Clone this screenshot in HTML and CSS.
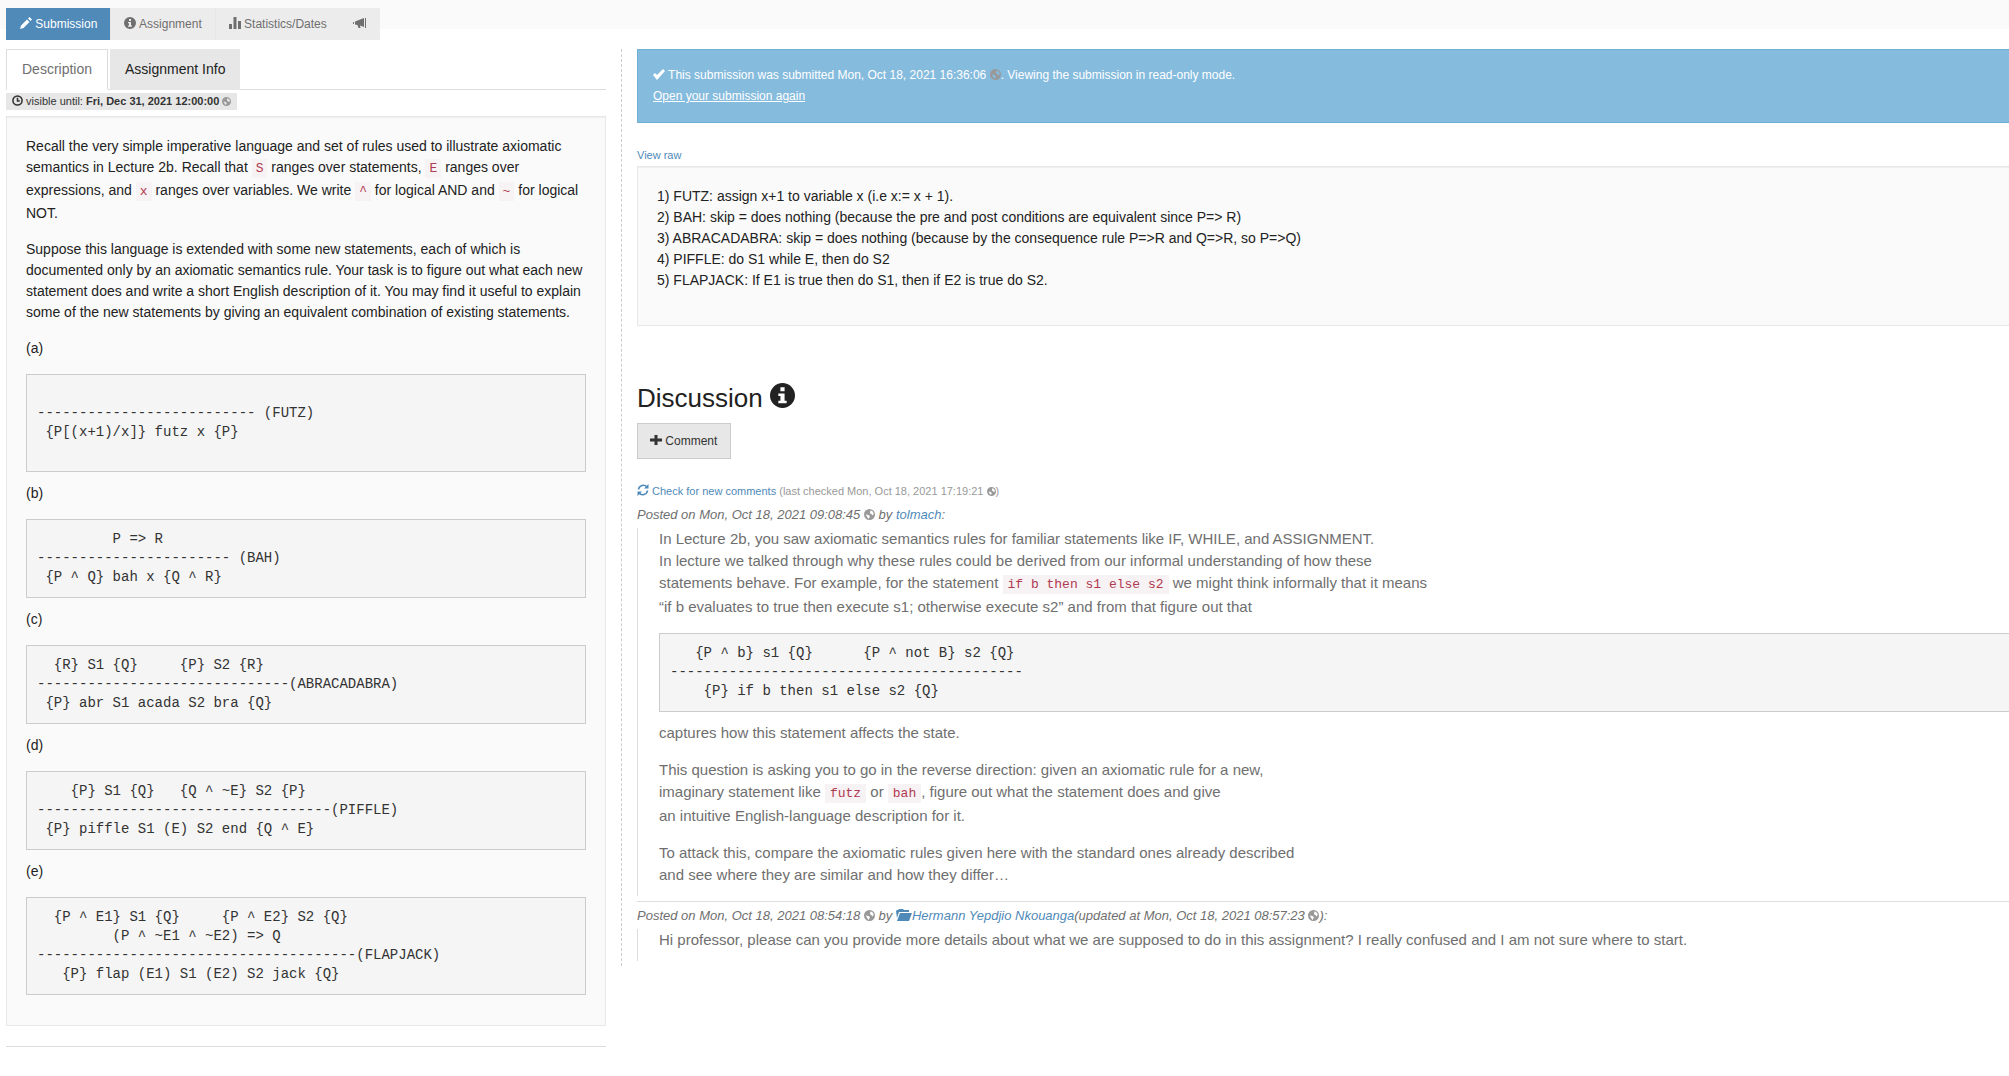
FILE: index.html
```
<!DOCTYPE html>
<html lang="en">
<head>
<meta charset="utf-8">
<title>Submission</title>
<link rel="stylesheet" href="styles.css">
</head>
<body>
<svg class="sprite" aria-hidden="true">
  <symbol id="pencil" viewBox="0 0 12 12"><path d="M0 12l1-3.500 6-6L9.500 5l-6 6zM8 1.500L9.500 0 12 2.500 10.500 4z"/></symbol>
  <symbol id="info" viewBox="0 0 24 24"><path fill-rule="evenodd" d="M12 0a12 12 0 1 0 0 24a12 12 0 0 0 0-24zM10 4h4v4h-4zM8 10h6v7h2v2.500H8V17h2v-4.500H8z"/></symbol>
  <symbol id="stats" viewBox="0 0 12 12"><path d="M0 7h3v5H0zM4.500 0h3v12h-3zM9 4h3v8H9z"/></symbol>
  <symbol id="horn" viewBox="0 0 14 12"><path d="M0 5h1v2H0zM2 4.500L11 1v9L7 8.500l.500 2.500h-2L4.500 8 2 7.500zM12 1h1v10h-1z"/></symbol>
  <symbol id="clock" viewBox="0 0 12 12"><path fill="none" stroke="currentColor" stroke-width="1.700" d="M6 1a5 5 0 1 0 0 10A5 5 0 0 0 6 1zM6 3v3.500h2.500"/></symbol>
  <symbol id="globe" viewBox="0 0 12 12"><path fill-rule="evenodd" d="M6 0a6 6 0 1 0 0 12A6 6 0 0 0 6 0zM7 1.500l2 .8 1.700 2.700L9.500 7 8 5.500 6.500 4.500zM2 6l3 .5L6.500 8 5 10.800 3.500 9z"/></symbol>
  <symbol id="check" viewBox="0 0 12 12"><path d="M0 7l2-2 2 2 6-6 2 2-8 9z"/></symbol>
  <symbol id="plus" viewBox="0 0 12 12"><path d="M4.500 1h3v3.500H12v3H7.500V11h-3V7.500H0v-3h4.500z"/></symbol>
  <symbol id="refresh" viewBox="0 0 12 12"><path fill="none" stroke="currentColor" stroke-width="1.600" d="M1.500 5.500C2 1 7.500 0 10 3M10.500 6.500C10 11 4.500 12 2 9"/><path d="M11.500 0v4.500H7zM.5 12V7.500H5z"/></symbol>
  <symbol id="folder" viewBox="0 0 16 12"><path d="M0 2l1-1h1l1-1h4l1 1h5v2H3L1 9zM4 4h12l-3 8H1z"/></symbol>
</svg>
<div class="topband">
  <nav class="crumbs">
    <a class="crumb active" href="#submission"><svg class="icon"><use href="#pencil"/></svg> Submission</a>
    <a class="crumb" href="#assignment"><svg class="icon"><use href="#info"/></svg> Assignment</a>
    <a class="crumb plain" href="#statistics"><svg class="icon"><use href="#stats"/></svg> Statistics/Dates</a>
    <a class="crumb plain" href="#announcements" aria-label="Announcements"><svg class="icon horn"><use href="#horn"/></svg></a>
  </nav>
</div>
<div class="columns">
  <section class="task">
    <div class="tabs" role="tablist">
      <button class="tab selected" type="button" role="tab" aria-selected="true">Description</button>
      <button class="tab" type="button" role="tab" aria-selected="false">Assignment Info</button>
    </div>
    <div class="until"><svg class="icon small"><use href="#clock"/></svg> visible until: <b>Fri, Dec 31, 2021 12:00:00</b> <svg class="icon globe tiny"><use href="#globe"/></svg></div>
    <div class="well">
      <p>Recall the very simple imperative language and set of rules used to illustrate axiomatic semantics in Lecture 2b. Recall that <code>S</code> ranges over statements, <code>E</code> ranges over expressions, and <code>x</code> ranges over variables. We write <code>^</code> for logical AND and <code>~</code> for logical NOT.</p>
      <p>Suppose this language is extended with some new statements, each of which is documented only by an axiomatic semantics rule. Your task is to figure out what each new statement does and write a short English description of it. You may find it useful to explain some of the new statements by giving an equivalent combination of existing statements.</p>
      <p>(a)</p>
<pre>&#32;
-------------------------- (FUTZ)
 {P[(x+1)/x]} futz x {P}
&#32;
</pre>
      <p>(b)</p>
<pre>         P =&gt; R
----------------------- (BAH)
 {P ^ Q} bah x {Q ^ R}
</pre>
      <p>(c)</p>
<pre>  {R} S1 {Q}     {P} S2 {R}
------------------------------(ABRACADABRA)
 {P} abr S1 acada S2 bra {Q}
</pre>
      <p>(d)</p>
<pre>    {P} S1 {Q}   {Q ^ ~E} S2 {P}
-----------------------------------(PIFFLE)
 {P} piffle S1 (E) S2 end {Q ^ E}
</pre>
      <p>(e)</p>
<pre>  {P ^ E1} S1 {Q}     {P ^ E2} S2 {Q}
         (P ^ ~E1 ^ ~E2) =&gt; Q
--------------------------------------(FLAPJACK)
   {P} flap (E1) S1 (E2) S2 jack {Q}
</pre>
    </div>
    <hr>
  </section>
  <main class="work">
    <div class="alert">
      <div><svg class="icon"><use href="#check"/></svg> This submission was submitted Mon, Oct 18, 2021 16:36:06 <svg class="icon globe small"><use href="#globe"/></svg>. Viewing the submission in read-only mode.</div>
      <a href="#reopen">Open your submission again</a>
    </div>
    <div class="raw"><a href="#raw">View raw</a></div>
    <div class="well">
      <p>1) FUTZ: assign x+1 to variable x (i.e x:= x + 1).<br>
      2) BAH: skip = does nothing (because the pre and post conditions are equivalent since P=&gt; R)<br>
      3) ABRACADABRA: skip = does nothing (because by the consequence rule P=&gt;R and Q=&gt;R, so P=&gt;Q)<br>
      4) PIFFLE: do S1 while E, then do S2<br>
      5) FLAPJACK: If E1 is true then do S1, then if E2 is true do S2.</p>
    </div>
    <h2>Discussion <svg class="icon heading"><use href="#info"/></svg></h2>
    <button class="comment" type="button"><svg class="icon"><use href="#plus"/></svg> Comment</button>
    <div class="check"><a href="#check-new"><svg class="icon"><use href="#refresh"/></svg> Check for new comments</a> (last checked Mon, Oct 18, 2021 17:19:21 <svg class="icon globe tiny"><use href="#globe"/></svg>)</div>
    <article class="post">
      <div class="byline">Posted on Mon, Oct 18, 2021 09:08:45 <svg class="icon globe small"><use href="#globe"/></svg> by <a href="#tolmach">tolmach</a>:</div>
      <blockquote>
        <p>In Lecture 2b, you saw axiomatic semantics rules for familiar statements like IF, WHILE, and ASSIGNMENT.<br>
        In lecture we talked through why these rules could be derived from our informal understanding of how these<br>
        statements behave. For example, for the statement <code>if b then s1 else s2</code> we might think informally that it means<br>
        “if b evaluates to true then execute s1; otherwise execute s2” and from that figure out that</p>
<pre>   {P ^ b} s1 {Q}      {P ^ not B} s2 {Q}
------------------------------------------
    {P} if b then s1 else s2 {Q}
</pre>
        <p>captures how this statement affects the state.</p>
        <p>This question is asking you to go in the reverse direction: given an axiomatic rule for a new,<br>
        imaginary statement like <code>futz</code> or <code>bah</code>, figure out what the statement does and give<br>
        an intuitive English-language description for it.</p>
        <p>To attack this, compare the axiomatic rules given here with the standard ones already described<br>
        and see where they are similar and how they differ…</p>
      </blockquote>
    </article>
    <article class="post">
      <div class="byline">Posted on Mon, Oct 18, 2021 08:54:18 <svg class="icon globe small"><use href="#globe"/></svg> by <a href="#hermann"><svg class="icon folder"><use href="#folder"/></svg>Hermann Yepdjio Nkouanga</a>(updated at Mon, Oct 18, 2021 08:57:23 <svg class="icon globe small"><use href="#globe"/></svg>):</div>
      <blockquote>
        <p>Hi professor, please can you provide more details about what we are supposed to do in this assignment? I really confused and I am not sure where to start.</p>
      </blockquote>
    </article>
  </main>
</div>
</body>
</html>
```
FILE: styles.css
```
* { box-sizing: border-box; }

body {
  margin: 0;
  background: #fff;
  color: #222;
  font: 14px/21px "Liberation Sans", Arial, sans-serif;
}

a { color: #4f8ab9; text-decoration: none; }
p { margin: 0 0 15px; }
button { font-family: inherit; }

.sprite { position: absolute; width: 0; height: 0; }
.icon { width: 12px; height: 12px; fill: currentColor; vertical-align: -1px; }
.icon.small { width: 11px; height: 11px; }
.icon.tiny { width: 9px; height: 9px; }
.icon.globe { color: #999; }
.icon.horn { width: 14px; }
.icon.folder { width: 16px; }
.icon.heading { width: 25px; height: 25px; }

/* Breadcrumb bar */
.topband { height: 29px; background: #fafafa; padding: 8px 6px 0; }
.crumbs {
  display: inline-flex;
  height: 32px;
  background: #ececec;
  font-size: 12px;
  line-height: 32px;
  white-space: nowrap;
}
.crumb { padding: 0 13px; color: #6f6f6f; border-right: 1px solid #e6e6e6; }
.crumb.plain { border-right: 0; }
.crumb.active { padding-left: 14px; background: #4f8ab9; color: #fff; }

/* Two columns */
.columns { display: flex; align-items: flex-start; padding: 20px 0 0 6px; }
.task { flex: 0 0 600px; }
.work {
  flex: 1;
  min-width: 0;
  margin-left: 15px;
  padding-left: 15px;
  border-left: 1px dashed #ccc;
}

.tabs { display: flex; gap: 2px; border-bottom: 1px solid #ddd; }
.tab {
  height: 41px;
  margin-bottom: -1px;
  padding: 0 15px 2px;
  border: 0;
  background: #e7e7e7;
  color: #222;
  font-size: 14px;
}
.tab.selected {
  border: 1px solid #ddd;
  border-bottom-color: #fff;
  background: #fff;
  color: #6f6f6f;
}

.until {
  display: inline-block;
  height: 17px;
  margin: 3px 0 6px;
  padding: 0 6px;
  background: #e7e7e7;
  color: #333;
  font-size: 11px;
  line-height: 17px;
  vertical-align: top;
}

.well {
  padding: 19px;
  border: 1px solid #e8e8e8;
  background: #fafafa;
  box-shadow: inset 0 1px 1px rgba(0, 0, 0, 0.05);
}
.task .well { margin-bottom: 20px; }
.work .well { border-right: 0; }

code {
  padding: 2px 4px;
  background: #f7f2f4;
  color: #b03a50;
  font: 13px/23px "Liberation Mono", "Courier New", monospace;
}

pre {
  margin: 0 0 11px;
  padding: 10px;
  border: 1px solid #ccc;
  background: #f5f5f5;
  color: #333;
  font: 14px/19px "Liberation Mono", "Courier New", monospace;
}

hr { margin: 0; border: 0; border-top: 1px solid #ddd; }

/* Submission */
.alert {
  margin-bottom: 21px;
  padding: 15px;
  border: 1px solid #6db0d3;
  border-right: 0;
  background: #85bbdd;
  color: #fff;
  font-size: 12px;
}
.alert a { color: #fff; text-decoration: underline; }
.raw { font-size: 11px; line-height: 22px; }

/* Discussion */
h2 { margin: 56px 0 9px; font-size: 26px; font-weight: 400; line-height: 32px; }
.comment {
  display: block;
  height: 36px;
  padding: 0 13px 0 12px;
  border: 1px solid #ccc;
  background: #e7e7e7;
  color: #333;
  font-size: 12px;
}
.check { margin-top: 22px; color: #999; font-size: 11px; line-height: 20px; }
.post { padding-bottom: 5px; }
.post + .post { border-top: 1px solid #ddd; }
.byline { padding: 3px 0; color: #6f6f6f; font-size: 13px; font-style: italic; }
blockquote {
  margin: 0;
  padding: 0 0 10px 21px;
  border-left: 1px solid #ddd;
  color: #6f6f6f;
  font-size: 15px;
  line-height: 22px;
}
blockquote p:last-child { margin-bottom: 0; }
blockquote code { padding: 2px 5px; }
blockquote pre { margin-bottom: 10px; border-right: 0; }
```
